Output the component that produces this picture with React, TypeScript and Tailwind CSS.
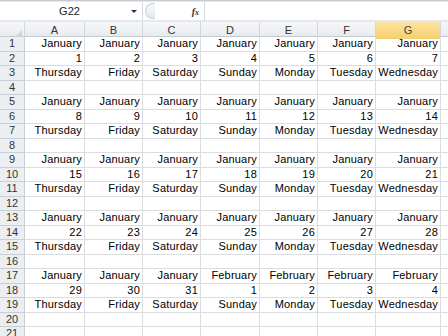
import React from 'react';

const cols = ['A', 'B', 'C', 'D', 'E', 'F', 'G'];
const days = ['Thursday', 'Friday', 'Saturday', 'Sunday', 'Monday', 'Tuesday', 'Wednesday'];

// build the 21 rows of the sheet
function buildRows(): string[][] {
  const rows: string[][] = [];
  for (let w = 0; w < 5; w++) {
    const months: string[] = [];
    const nums: string[] = [];
    for (let d = 0; d < 7; d++) {
      const n = w * 7 + d + 1;
      if (n > 31) {
        months.push('February');
        nums.push(String(n - 31));
      } else {
        months.push('January');
        nums.push(String(n));
      }
    }
    rows.push(months, nums, days, ['', '', '', '', '', '', '']);
  }
  return rows.concat([['', '', '', '', '', '', '']]);
}

const grid = 'grid grid-cols-[25px_60px_58px_58px_59px_58px_58px_65px_1fr]';

export default function App() {
  const rows = buildRows();

  return (
    <div className="w-[448px] h-[336px] overflow-hidden bg-white text-[11px] text-black" style={{ fontFamily: '"Liberation Sans", Arial, sans-serif' }}>
      {/* Formula bar */}
      <div className="h-[22px] bg-[#e4e8ed] border-t border-[#c7ccd3] pt-[1px] pb-[2px]">
        <div className="flex h-[18px] bg-white">
          <div className="w-[143px] flex items-center border-r border-[#d5dae0] relative">
            <span className="flex-1 text-center pl-[8px] text-[#222]">G22</span>
            <span className="w-0 h-0 mr-[5px] border-l-[3px] border-r-[3px] border-t-[3px] border-l-transparent border-r-transparent border-t-[#333]" />
          </div>
          <div className="w-[62px] flex items-center border-r border-[#d5dae0] bg-white">
            <span className="ml-[2px] w-[10px] h-[16px] rounded-l-full border border-r-0 border-[#c9ced5] bg-[linear-gradient(#f7f8fa,#e6e9ee)]" />
            <span className="ml-auto mr-[5px] italic font-bold text-[10px] text-[#333]" style={{ fontFamily: '"Liberation Serif", serif' }}>
              f<span className="text-[8px]">x</span>
            </span>
          </div>
          <div className="flex-1" />
        </div>
      </div>

      {/* Column header */}
      <div className={`${grid} h-[15px] bg-[linear-gradient(#f6f7f9,#e8ebee)] border-b border-[#c5cad1] text-[#333]`}>
        <div className="relative border-r border-[#d2d6dc]">
          <span className="absolute right-[2px] bottom-[2px] w-0 h-0 border-l-[7px] border-t-[7px] border-l-transparent border-t-transparent border-b-0 border-r-0 border-[#c8ccd2] border-l-transparent" style={{ borderRight: '0', borderBottom: '7px solid #d0d4d9', borderLeft: '7px solid transparent', borderTop: '0' }} />
        </div>
        {cols.map((c) => (
          <div
            key={c}
            className={`flex items-center justify-center border-r border-[#d2d6dc] ${
              c === 'G' ? 'bg-[linear-gradient(#fbe3a0,#f6cf6e)] text-[#444]' : ''
            }`}
          >
            {c}
          </div>
        ))}
        <div />
      </div>

      {/* Rows */}
      {rows.map((r, i) => (
        <div key={i} className={`${grid} h-[14.5px]`}>
          <div className="flex items-center justify-center bg-[#eceff2] border-r border-b border-[#c9ced4] text-[#333] leading-none">
            {i + 1}
          </div>
          {r.map((v, j) => (
            <div key={j} className="flex items-center justify-end pr-[2px] border-r border-b border-[#dadcdd] leading-none whitespace-nowrap tracking-[0.2px]">
              {v}
            </div>
          ))}
          <div className="border-b border-[#dadcdd]" />
        </div>
      ))}
    </div>
  );
}
